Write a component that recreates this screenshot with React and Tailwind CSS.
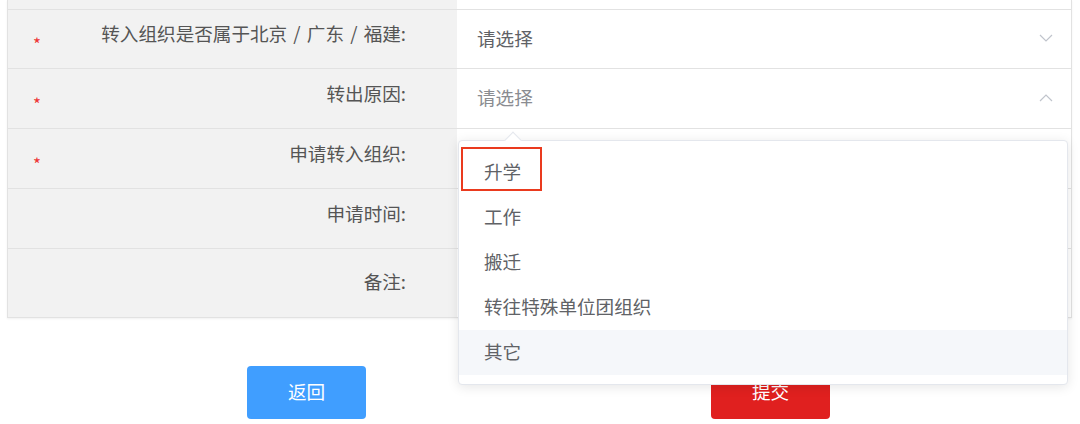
export default function App() {
  const rows = [
    { label: '转入组织是否属于北京 / 广东 / 福建:', req: true, h: 'h-[59px]', pad: 'pb-[12px]', value: 'select', open: false, valueColor: 'text-[#606266]' },
    { label: '转出原因:', req: true, h: 'h-[60px]', pad: 'pb-[12px]', value: 'select', open: true, valueColor: 'text-[#8a8c91]' },
    { label: '申请转入组织:', req: true, h: 'h-[60px]', pad: 'pb-[12px]' },
    { label: '申请时间:', req: false, h: 'h-[60px]', pad: 'pb-[12px]' },
    { label: '备注:', req: false, h: 'h-[68px]', pad: 'pb-[5px]', last: true },
  ]

  const options = ['升学', '工作', '搬迁', '转往特殊单位团组织', '其它']

  return (
    <div className="relative w-[1080px] h-[424px] bg-white overflow-hidden text-[18.6px] font-['Noto_Sans_CJK_SC','Noto_Sans',sans-serif]">
      <div className="ml-[7px] w-[1065px] border-x border-b border-[#e2e2e2] shadow-[0_1px_2px_rgba(0,0,0,0.06)]">
        <div className="flex h-[10px] border-b border-[#e2e2e2]">
          <div className="w-[449px] bg-[#f2f2f2]" />
          <div className="flex-1 bg-white" />
        </div>

        {rows.map((r) => (
          <div key={r.label} className={`flex ${r.h} ${r.last ? '' : 'border-b border-[#e2e2e2]'}`}>
            <div className={`relative w-[449px] bg-[#f2f2f2] flex items-center justify-end pr-[51px] text-[#555] [word-spacing:2px] ${r.pad}`}>
              {r.req && (
                <span className="absolute left-[25px] top-1/2 -translate-y-1/2 mt-[4px] text-[#ee3535] text-[17px] leading-none">*</span>
              )}
              <span>{r.label}</span>
            </div>
            <div className="flex-1 bg-white flex items-center justify-between pl-[20px] pr-[18px] pb-[3px]">
              {r.value === 'select' && (
                <>
                  <span className={r.valueColor}>请选择</span>
                  <svg width="14" height="8" viewBox="0 0 14 8" fill="none" className="mt-[1px]">
                    {r.open ? (
                      <polyline points="1,7 7,1 13,7" stroke="#c0c4cc" strokeWidth="1.2" />
                    ) : (
                      <polyline points="1,1 7,7 13,1" stroke="#c0c4cc" strokeWidth="1.2" />
                    )}
                  </svg>
                </>
              )}
            </div>
          </div>
        ))}
      </div>

      <div className="flex mt-[48px]">
        <button className="ml-[247px] w-[119px] h-[53px] rounded-[4px] bg-[#409eff] text-white pb-[3px]">返回</button>
        <button className="ml-[345px] w-[119px] h-[53px] rounded-[4px] bg-[#e0201f] text-white pb-[3px]">提交</button>
      </div>

      {/* dropdown */}
      <div className="absolute left-[458px] top-[140px] w-[610px] h-[245px] bg-white border border-[#e4e7ed] rounded-[4px] shadow-[0_2px_12px_rgba(0,0,0,0.1)] py-[9px]">
        <div className="absolute -top-[7px] left-[48px] w-[12px] h-[12px] rotate-45 bg-white border-l border-t border-[#e4e7ed]" />
        {options.map((o, i) => (
          <div key={o} className={`h-[45px] pl-[25px] pb-[4px] flex items-center text-[#606266] ${i === 4 ? 'bg-[#f5f7fa]' : ''}`}>
            {o}
          </div>
        ))}
        <div className="absolute left-[2px] top-[6px] w-[81px] h-[44px] border-2 border-[#ea3a1e]" />
      </div>
    </div>
  )
}
